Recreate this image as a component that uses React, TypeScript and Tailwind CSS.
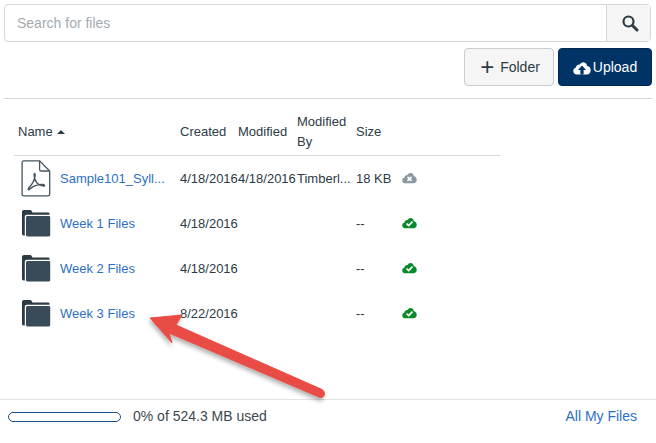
function SearchIcon() {
  return (
    <svg width="18" height="18" viewBox="0 0 18 18" fill="none" stroke="#2d3b45">
      <circle cx="7.5" cy="7.5" r="5" strokeWidth="2.2" />
      <path d="M11.5 11.5L16 16" strokeWidth="3" strokeLinecap="round" />
    </svg>
  );
}

const cloudPath =
  "M4 14.5C1.8 14.5 0.3 13 0.3 11C0.3 9.3 1.4 8 3 7.6C3.2 5.6 4.8 4.3 6.6 4.6C7.5 2.9 9 2 10.6 2.2C12.6 2.4 14 4 14.2 6.1C16.4 6.3 17.7 8.1 17.7 10.3C17.7 12.7 16 14.5 13.8 14.5Z";

function UploadCloud() {
  return (
    <svg width="18" height="15" viewBox="0 0 18 15">
      <path d={cloudPath} fill="#fff" />
      <path d="M9 5.5L13 10H10.6V14.5H7.4V10H5Z" fill="#003366" />
    </svg>
  );
}

function StatusCloud({ ok }: { ok: boolean }) {
  return (
    <svg width="15" height="13" viewBox="0 0 18 15">
      <path d={cloudPath} fill={ok ? "#0b8a2c" : "#8b969e"} />
      {ok ? (
        <path d="M5.5 8.8L8 11.2L12.6 6.4" fill="none" stroke="#fff" strokeWidth="2" />
      ) : (
        <path d="M6.6 6.8L11.4 11.6M11.4 6.8L6.6 11.6" fill="none" stroke="#fff" strokeWidth="1.9" />
      )}
    </svg>
  );
}

function FolderIcon() {
  return (
    <svg width="30" height="28" viewBox="0 0 30 28">
      <path
        d="M1 3C1 1.8 1.8 1 3 1H9C10 1 10.6 1.6 11 2.6L11.4 3.6H27C28 3.6 28.6 4.2 28.6 5V5.8H6C4.6 5.8 3.8 6.6 3.8 8V26.4H2.6C1.6 26.4 1 25.8 1 25Z"
        fill="#2d3b45"
      />
      <path
        d="M5 8.6C5 7.6 5.6 7 6.6 7H27.8C28.8 7 29.2 7.6 29.2 8.6V26C29.2 27 28.8 27.4 27.8 27.4H6.6C5.6 27.4 5 27 5 26Z"
        fill="#394b58"
      />
    </svg>
  );
}

function PdfIcon() {
  return (
    <svg width="30" height="37" viewBox="0 0 30 37" fill="none">
      <path
        d="M2.8 0.8H18.6L28.7 11V34.2C28.7 35.2 28 35.9 27 35.9H2.8C1.8 35.9 1.1 35.2 1.1 34.2V2.5C1.1 1.5 1.8 0.8 2.8 0.8Z"
        stroke="#46555f"
        strokeWidth="1.3"
      />
      <path d="M18.6 0.8V9.4C18.6 10.4 19.2 11 20.2 11H28.7" stroke="#46555f" strokeWidth="1.3" />
      <path
        d="M13.5 13.5C12.8 13.5 13.2 18.5 15 21.5C16.5 24.5 20.5 26.2 23 26C24.2 25.8 23.5 24.6 21.5 24.5C17.5 24.3 12 26 9.5 28.5C7.5 30.5 6.5 29.5 8 27.8C10.5 25 13.5 20.5 14 16C14.2 14.5 14 13.5 13.5 13.5Z"
        stroke="#46555f"
        strokeWidth="1.5"
      />
    </svg>
  );
}

const rows = [
  { name: "Sample101_Syll...", created: "4/18/2016", modified: "4/18/2016", by: "Timberl...", size: "18 KB", ok: false, pdf: true },
  { name: "Week 1 Files", created: "4/18/2016", modified: "", by: "", size: "--", ok: true, pdf: false },
  { name: "Week 2 Files", created: "4/18/2016", modified: "", by: "", size: "--", ok: true, pdf: false },
  { name: "Week 3 Files", created: "8/22/2016", modified: "", by: "", size: "--", ok: true, pdf: false },
];

const columns = "grid grid-cols-[166px_58px_59px_59px_46px_1fr]";

export default function App() {
  return (
    <div className="relative flex h-[443px] w-[656px] flex-col overflow-hidden bg-white pt-1 font-['Liberation_Sans',Arial,sans-serif] text-[14px] text-[#2d3b45]">
      {/* Busca */}
      <div className="ml-1 mr-[5px] flex h-[38px] rounded border border-[#d4d6d8]">
        <div className="flex flex-1 items-center pl-3 text-[#a4abb0]">Search for files</div>
        <div className="flex w-[44px] items-center justify-center border-l border-[#d4d6d8] bg-[#f5f5f5] pl-[2px]">
          <SearchIcon />
        </div>
      </div>

      {/* Botões */}
      <div className="mt-[6px] flex justify-end gap-1 pr-1">
        <button className="flex h-[38px] w-[90px] items-center justify-center gap-[6px] rounded border border-[#c7cdd1] bg-[#f5f5f5] pl-[2px] text-[#2d3b45]">
          <span className="text-[24px] leading-none">+</span>
          <span>Folder</span>
        </button>
        <button className="flex h-[38px] w-[94px] items-center justify-center gap-[2px] rounded border border-[#002855] bg-[#003366] text-white">
          <UploadCloud />
          <span>Upload</span>
        </button>
      </div>

      <div className="mx-1 mt-3 border-t border-[#d4d6d8]" />

      {/* Tabela de arquivos */}
      <div className="ml-[14px] w-[486px]">
        <div className={`${columns} h-[57px] items-center border-b border-[#d4d6d8] pt-[10px] text-[13px] leading-[20px]`}>
          <div className="flex items-center gap-1 pl-1">
            Name
            <span className="h-0 w-0 border-x-[4px] border-b-[4px] border-x-transparent border-b-[#2d3b45]" />
          </div>
          <div>Created</div>
          <div>Modified</div>
          <div>
            Modified
            <br />
            By
          </div>
          <div>Size</div>
          <div />
        </div>
        {rows.map((row) => (
          <div key={row.name} className={`${columns} h-[45px] items-center text-[13px]`}>
            <div className="flex items-center">
              <div className={`flex w-[46px] justify-center pr-[2px] ${row.pdf ? "" : "pb-[2px]"}`}>
                {row.pdf ? <PdfIcon /> : <FolderIcon />}
              </div>
              <a className="text-[#2d6fc4]">{row.name}</a>
            </div>
            <div className="whitespace-nowrap">{row.created}</div>
            <div className="whitespace-nowrap">{row.modified}</div>
            <div className="whitespace-nowrap">{row.by}</div>
            <div className="whitespace-nowrap">{row.size}</div>
            <div className="pb-[2px]">
              <StatusCloud ok={row.ok} />
            </div>
          </div>
        ))}
      </div>

      {/* Rodapé */}
      <div className="mt-auto flex h-[44px] items-center border-t border-[#e2e4e6] pb-[10px] pl-2 pr-[19px] text-[14px]">
        <div className="h-[10px] w-[113px] rounded-full border border-[#1f4f87]" />
        <span className="ml-3 text-[#3c4850]">0% of 524.3 MB used</span>
        <a className="ml-auto text-[#2d6fc4]">All My Files</a>
      </div>

      {/* Seta vermelha por cima da tabela */}
      <svg className="absolute left-0 top-0" width="656" height="443" viewBox="0 0 656 443">
        <defs>
          <filter id="arrowShadow" x="-10%" y="-10%" width="120%" height="130%">
            <feDropShadow dx="-1" dy="3" stdDeviation="2" floodColor="#000" floodOpacity="0.3" />
          </filter>
        </defs>
        <path
          d="M150 318L182 315L176 325L322 389.5C326 392 325 398 320 397.5L169 333L172 343Z"
          fill="#e94c45"
          stroke="#e94c45"
          strokeWidth="1"
          strokeLinejoin="round"
          filter="url(#arrowShadow)"
        />
      </svg>
    </div>
  );
}
